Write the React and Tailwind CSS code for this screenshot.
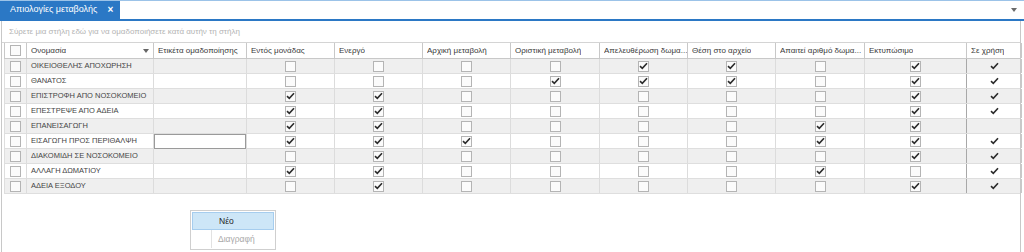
import React from "react";

const cols = [
  { w: "w-[22px]" },
  { w: "w-[127px]", label: "Ονομασία", left: true, arrow: true },
  { w: "w-[93px]", label: "Ετικέτα ομαδοποίησης", left: true },
  { w: "w-[88px]", label: "Εντός μονάδας" },
  { w: "w-[88px]", label: "Ενεργό" },
  { w: "w-[88px]", label: "Αρχική μεταβολή" },
  { w: "w-[89px]", label: "Οριστική μεταβολή" },
  { w: "w-[88px]", label: "Απελευθέρωση δωμα..." },
  { w: "w-[88px]", label: "Θέση στο αρχείο" },
  { w: "w-[89px]", label: "Απαιτεί αριθμό δωμα..." },
  { w: "w-[102px]", label: "Εκτυπώσιμο" },
  { w: "w-[55px]", label: "Σε χρήση" },
];

const rows = [
  ["ΟΙΚΕΙΟΘΕΛΗΣ ΑΠΟΧΩΡΗΣΗ", [0, 0, 0, 0, 1, 1, 0, 1], 1],
  ["ΘΑΝΑΤΟΣ", [0, 0, 0, 1, 1, 1, 0, 1], 1],
  ["ΕΠΙΣΤΡΟΦΗ ΑΠΟ ΝΟΣΟΚΟΜΕΙΟ", [1, 1, 0, 0, 0, 0, 0, 1], 1],
  ["ΕΠΕΣΤΡΕΨΕ ΑΠΟ ΑΔΕΙΑ", [1, 1, 0, 0, 0, 0, 0, 1], 1],
  ["ΕΠΑΝΕΙΣΑΓΩΓΗ", [1, 1, 0, 0, 0, 0, 1, 1], 0],
  ["ΕΙΣΑΓΩΓΗ ΠΡΟΣ ΠΕΡΙΘΑΛΨΗ", [1, 1, 1, 0, 0, 0, 1, 1], 1],
  ["ΔΙΑΚΟΜΙΔΗ ΣΕ ΝΟΣΟΚΟΜΕΙΟ", [0, 1, 0, 0, 0, 0, 0, 1], 1],
  ["ΑΛΛΑΓΗ ΔΩΜΑΤΙΟΥ", [1, 1, 0, 0, 0, 0, 1, 0], 1],
  ["ΑΔΕΙΑ ΕΞΟΔΟΥ", [0, 1, 0, 0, 0, 0, 0, 1], 1],
];

function Tick({ className = "" }) {
  return (
    <svg width="9" height="8" viewBox="0 0 9 8" className={className}>
      <path d="M1 4.2 L3.3 6.4 L8 1.3" fill="none" stroke="#2b2b2b" strokeWidth="1.6" />
    </svg>
  );
}

function Box({ checked }) {
  return (
    <div className="w-[11px] h-[11px] border border-[#b4b4b4] bg-[#fbfbfb] flex items-center justify-center">
      {checked ? <Tick /> : null}
    </div>
  );
}

export default function App() {
  return (
    <div className="w-[1024px] h-[252px] bg-white overflow-hidden relative" style={{ fontFamily: '"Liberation Sans", Arial, sans-serif' }}>
      {/* tab strip */}
      <div className="h-[21px] flex border-t border-[#9cc3e8] border-b-2 border-b-[#2b78c5] relative">
        <div className="w-[120px] h-full bg-[#2b78c5] text-white text-[9px] flex items-center pl-[10px] gap-[10px] whitespace-nowrap">
          <span>Απιολογίες μεταβολής</span>
          <span className="text-[10px] font-bold leading-none">×</span>
        </div>
        <div className="flex-1" />
        <div className="w-[20px] flex items-center justify-center">
          <svg width="6" height="4" viewBox="0 0 6 4"><path d="M0 0 L6 0 L3 4 Z" fill="#6a6a6a" /></svg>
        </div>
      </div>
      {/* panel */}
      <div className="ml-[1px] mr-[3px] border-l border-r border-[#c8c8c8] h-[231px] flex flex-col">
        <div className="h-[22px] flex items-center pl-[7px] text-[8px] text-[#b3b3b3] border-b border-[#d4d4d4] whitespace-nowrap">
          Σύρετε μια στήλη εδώ για να ομαδοποιήσετε κατά αυτήν τη στήλη
        </div>
        <div className="pl-[2px]">
          {/* header */}
          <div className="flex h-[16px] border-b border-[#c8c8c8] border-l border-[#c8c8c8]">
            {cols.map((c, i) => (
              <div
                key={i}
                className={`${c.w} shrink-0 h-full flex items-center overflow-hidden border-r border-[#c8c8c8] text-[8px] text-[#3a3a3a] ${i === 0 ? "justify-center" : "pl-[4px]"}`}
              >
                {i === 0 ? (
                  <Box checked={false} />
                ) : (
                  <>
                    <span className="whitespace-nowrap overflow-hidden">{c.label}</span>
                    {c.arrow ? (
                      <svg width="6" height="4" viewBox="0 0 6 4" className="ml-auto mr-[4px] shrink-0"><path d="M0 0 L6 0 L3 4 Z" fill="#666" /></svg>
                    ) : null}
                  </>
                )}
              </div>
            ))}
          </div>
          {/* rows */}
          {rows.map(([name, vals, used], r) => (
            <div key={r} className={`flex h-[15px] border-b border-[#dedede] border-l border-[#c8c8c8] ${r % 2 === 0 ? "bg-[#efefef]" : "bg-white"}`}>
              <div className="w-[22px] shrink-0 flex items-center justify-center border-r border-[#dcdcdc]">
                <Box checked={false} />
              </div>
              <div className="w-[127px] shrink-0 flex items-center pl-[4px] border-r border-[#dcdcdc] text-[7.5px] text-[#444] whitespace-nowrap">
                {name}
              </div>
              <div className="w-[93px] shrink-0 flex items-center border-r border-[#dcdcdc]">
                {r === 5 ? <div className="w-full h-[15px] bg-white border border-[#9a9a9a]" /> : null}
              </div>
              {vals.map((v, j) => (
                <div key={j} className={`${cols[3 + j].w} shrink-0 flex items-center justify-center border-r ${j === 7 ? "border-[#a8a8a8]" : "border-[#dcdcdc]"}`}>
                  <Box checked={!!v} />
                </div>
              ))}
              <div className="w-[55px] shrink-0 flex items-center justify-center border-r border-[#c8c8c8]">
                {used ? <Tick /> : null}
              </div>
            </div>
          ))}
        </div>
      </div>
      {/* context menu */}
      <div className="absolute left-[190px] top-[210px] w-[86px] bg-white border border-[#cfcfcf] p-[1px] text-[8.5px]">
        <div className="h-[18px] flex items-center bg-[#cde6f7] border border-[#a6cdee]">
          <div className="w-[20px] h-full" />
          <span className="pl-[6px] text-[#222]">Νέο</span>
        </div>
        <div className="h-[18px] flex items-center">
          <div className="w-[20px] h-full border-r border-[#e2e2e2]" />
          <span className="pl-[6px] text-[#a8a8a8]">Διαγραφή</span>
        </div>
      </div>
    </div>
  );
}
